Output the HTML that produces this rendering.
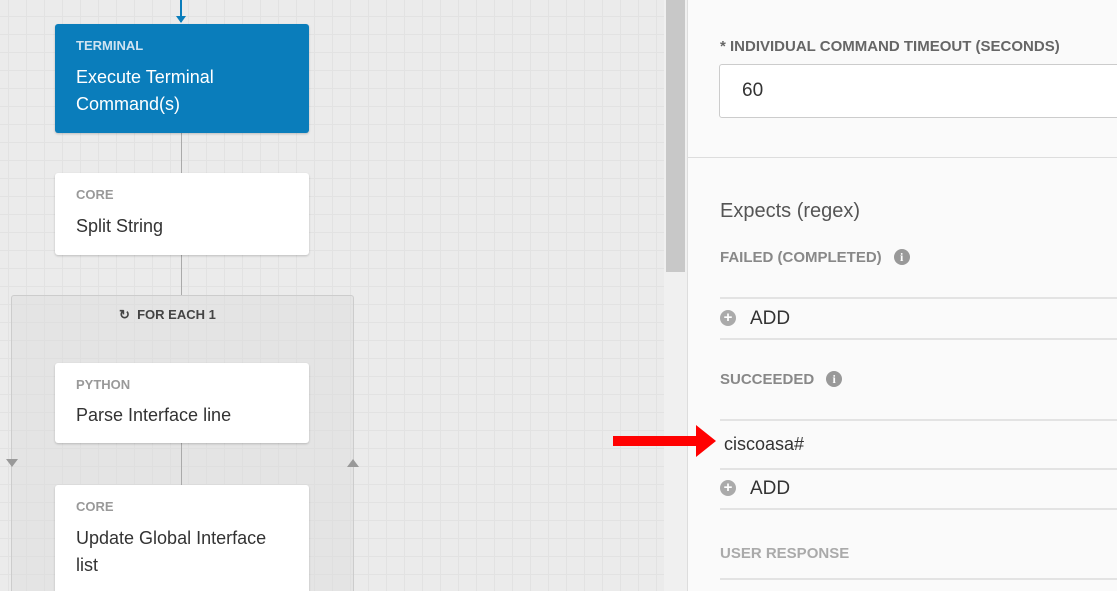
<!DOCTYPE html><html style="overflow:hidden;height:591px"><head><style>
body{margin:0;width:1117px;height:591px;overflow:hidden;position:relative;font-family:"Liberation Sans",sans-serif;background:#fafafa}
.canvas{position:absolute;left:0;top:0;width:664px;height:591px;background-color:#ebebeb;background-image:linear-gradient(#e2e2e2 1px,transparent 1px),linear-gradient(90deg,#e2e2e2 1px,transparent 1px);background-size:18px 18px;background-position:8px 16px}
.abs{position:absolute}
.card{position:absolute;left:55px;width:254px;background:#fff;border-radius:3px;box-shadow:0 1px 2px rgba(0,0,0,.2)}
.card .t{position:absolute;left:21px;top:14px;font-size:13px;font-weight:bold;color:#999}
.card .n{position:absolute;left:21px;top:42px;font-size:18px;color:#333;line-height:27px}
.vl{position:absolute;left:181px;width:1px;background:#aaa}
.lab{position:absolute;left:720px;font-size:15px;font-weight:bold;color:#888}
.hr{position:absolute;left:720px;right:0;height:2px;background:#e3e3e3}
.add{position:absolute;left:720px;font-size:19px;color:#333}
.plus{display:inline-block;width:16px;height:16px;border-radius:50%;background:#aaa;color:#fff;font-size:15px;line-height:16px;text-align:center;font-weight:bold;vertical-align:2px;margin-right:14px}
.info{display:inline-block;width:16px;height:16px;border-radius:50%;background:#999;color:#fff;font-size:12px;line-height:16px;text-align:center;font-weight:bold;margin-left:12px;vertical-align:1px;font-family:"Liberation Serif",serif}
</style></head><body>
<div class="canvas"></div>
<div class="abs" style="left:11px;top:295px;width:341px;height:300px;background:rgba(220,220,220,.45);border:1px solid #ccc;border-radius:3px"></div>
<div class="abs" style="left:119px;top:307px;font-size:13px;font-weight:bold;color:#444">↻ &nbsp;FOR EACH 1</div>
<div class="vl" style="top:0;height:22px;background:#0a7dbb;width:2px;left:180px"></div>
<div class="abs" style="left:176px;top:16px;border:5px solid transparent;border-top:7px solid #0a7dbb;border-bottom:0"></div>
<div class="vl" style="top:133px;height:40px"></div>
<div class="vl" style="top:255px;height:40px"></div>
<div class="vl" style="top:443px;height:42px"></div>
<div class="abs" style="left:6px;top:459px;border:6px solid transparent;border-top:8px solid #999;border-bottom:0"></div>
<div class="abs" style="left:347px;top:459px;border:6px solid transparent;border-bottom:8px solid #999;border-top:0"></div>
<div class="card" style="top:24px;height:109px;background:#0a7dbb"><div class="t" style="color:#cfe3f1">TERMINAL</div><div class="n" style="color:#fff;top:40px">Execute Terminal<br>Command(s)</div></div>
<div class="card" style="top:173px;height:82px"><div class="t">CORE</div><div class="n" style="top:40px">Split String</div></div>
<div class="card" style="top:363px;height:80px"><div class="t">PYTHON</div><div class="n" style="top:39px">Parse Interface line</div></div>
<div class="card" style="top:485px;height:106px;border-radius:3px 3px 0 0"><div class="t">CORE</div><div class="n" style="top:40px">Update Global Interface<br>list</div></div>
<div class="abs" style="left:664px;top:0;width:23px;height:591px;background:#f0f0f0;border-right:1px solid #ddd"></div>
<div class="abs" style="left:666px;top:0;width:19px;height:272px;background:#c8c8c8"></div>
<div class="lab" style="top:38px;color:#666;font-size:15px">* INDIVIDUAL COMMAND TIMEOUT (SECONDS)</div>
<div class="abs" style="left:719px;top:64px;width:400px;height:52px;background:#fff;border:1px solid #ccc;border-radius:3px"><span style="position:absolute;left:22px;top:15px;font-size:19px;color:#333">60</span></div>
<div class="abs" style="left:688px;right:0;top:157px;height:1px;background:#ddd"></div>
<div class="abs" style="left:720px;top:200px;font-size:20px;color:#555">Expects (regex)</div>
<div class="lab" style="top:249px">FAILED (COMPLETED)<span class="info">i</span></div>
<div class="hr" style="top:297px"></div>
<div class="add" style="top:308px"><span class="plus">+</span>ADD</div>
<div class="hr" style="top:338px"></div>
<div class="lab" style="top:371px">SUCCEEDED<span class="info">i</span></div>
<div class="hr" style="top:419px"></div>
<div class="abs" style="left:724px;top:434px;font-size:18px;color:#333">ciscoasa#</div>
<div class="hr" style="top:468px"></div>
<div class="add" style="top:478px"><span class="plus">+</span>ADD</div>
<div class="hr" style="top:508px"></div>
<div class="lab" style="top:545px;color:#aaa">USER RESPONSE</div>
<div class="hr" style="top:578px"></div>
<svg class="abs" style="left:612px;top:424px" width="106" height="34"><polygon points="1,12 84,12 84,1 104,17 84,33 84,22 1,22" fill="#f00"/></svg>
</body></html>
